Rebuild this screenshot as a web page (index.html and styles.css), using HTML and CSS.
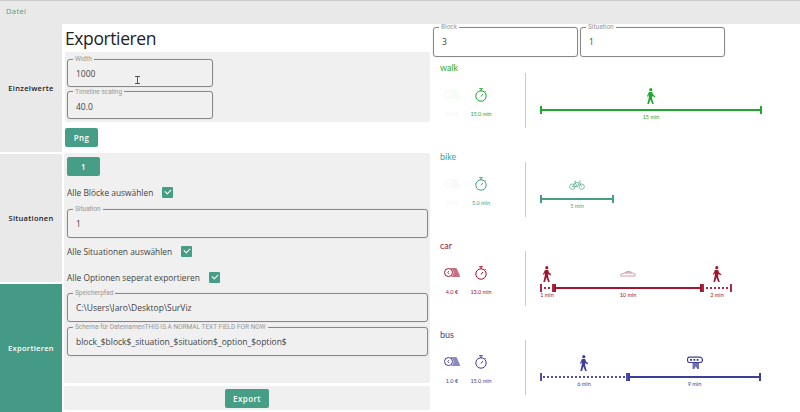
FILE: index.html
```html
<!DOCTYPE html>
<html lang="de">
<head>
    <meta charset="UTF-8">
    <title>Exportieren</title>
    <link rel="stylesheet" href="styles.css">
</head>
<body>
    <svg class="defs" width="0" height="0">
        <symbol id="i-walk" viewBox="0 0 10 16">
            <circle cx="4.800" cy="1.700" r="1.600" fill="currentColor"/>
            <path d="M3 4h3.200l.8 2.600L9.300 8.300 8.600 9.300 6.300 8l-.2 2.600L7.800 16H6.200L4.400 11.400 3 16H1.300L2.800 9.800V6.600L2 8.800 .9 8.300z" fill="currentColor"/>
        </symbol>
        <symbol id="i-bike" viewBox="0 0 24 14">
            <g fill="none" stroke="currentColor" stroke-width="1">
                <circle cx="5" cy="9.500" r="4"/>
                <circle cx="19" cy="9.500" r="4"/>
                <path d="M5 9.500 9 3.500h7l3 6M9 3.500l3.500 6L16 3.500M5 9.500h7.500M7.500 1.500h3M15 1h3"/>
            </g>
        </symbol>
        <symbol id="i-car" viewBox="0 0 24 10">
            <path d="M1 7c0-2 2-2.500 5-3 2-2 5-3 8.500-2.500 2 .3 3.500 1.500 5 2.500 2 .3 3.500 1 3.500 2.500 0 1-1 1.500-2 1.500H3C2 8.500 1 8 1 7z" fill="none" stroke="currentColor" stroke-width=".8" opacity=".8"/>
            <path d="M8 4c2-1.500 5-2 7-1.500l2 1.500z" fill="none" stroke="currentColor" stroke-width=".6" opacity=".7"/>
        </symbol>
        <symbol id="i-bus" viewBox="0 0 16 13">
            <path d="M2 .7h10.500c1.500 0 3 1.300 3 2.800s-1.200 2.500-2.700 2.500H2C1 6 .5 4.500 .5 3.200S1 .7 2 .7z" fill="none" stroke="currentColor" stroke-width="1.200"/>
            <path d="M3 2.500h2v1.800H3zM6.300 2.500h2v1.800h-2zM9.600 2.500h2v1.800h-2z" fill="currentColor"/>
            <path d="M5.500 6h6.500v6.500H10.300L8.800 10l-1.500 2.500H5.500z" fill="currentColor" opacity=".75"/>
        </symbol>
        <symbol id="i-clock" viewBox="0 0 12 14">
            <g fill="none" stroke="currentColor" stroke-width="1">
                <circle cx="6" cy="8" r="5.200"/>
                <path d="M4.200 .7h3.600M6 1v2M6 8.500l2-2.500M10 3.200l.9.9"/>
            </g>
        </symbol>
        <symbol id="i-cash" viewBox="0 0 16 11">
            <circle cx="4.500" cy="5.500" r="4" fill="none" stroke="currentColor" stroke-width="1"/>
            <path d="M6 1h5.500c2 0 2 2.500 3 4.500s1.500 3 1.500 4.500H7c1.500-1 2.500-2.800 2.500-4.500S8 2 6 1z" fill="currentColor" opacity=".6"/>
            <path d="M5 4 3.800 5.500 5 7" fill="none" stroke="currentColor" stroke-width=".8"/>
        </symbol>
    </svg>

    <header class="topbar">Datei</header>

    <div class="app">
        <nav class="tabs">
            <div class="tab">Einzelwerte</div>
            <div class="tab">Situationen</div>
            <div class="tab active">Exportieren</div>
        </nav>

        <main class="settings">
            <h1>Exportieren</h1>
            <div class="panel panel-single">
                <fieldset class="field narrow">
                    <legend>Width</legend>
                    <span>1000</span>
                    <svg class="ibeam" width="5" height="8" viewBox="0 0 5 8"><path d="M0 .5h5M0 7.500h5M2.500 .5v7" fill="none" stroke="#555"/></svg>
                </fieldset>
                <fieldset class="field narrow">
                    <legend>Timeline scaling</legend>
                    <span>40.0</span>
                </fieldset>
            </div>
            <div class="png-row"><button class="btn">Png</button></div>

            <div class="panel panel-situations">
                <button class="btn btn-wide">1</button>
                <label class="check check-first">Alle Blöcke auswählen <i class="box"></i></label>
                <fieldset class="field">
                    <legend>Situation</legend>
                    <span>1</span>
                </fieldset>
                <label class="check check-second">Alle Situationen auswählen <i class="box"></i></label>
                <label class="check check-third">Alle Optionen seperat exportieren <i class="box"></i></label>
                <fieldset class="field field-path">
                    <legend>Speicherpfad</legend>
                    <span>C:\Users\Jaro\Desktop\SurViz</span>
                </fieldset>
                <fieldset class="field">
                    <legend>Schema für DateinamenTHIS IS A NORMAL TEXT FIELD FOR NOW</legend>
                    <span>block_$block$_situation_$situation$_option_$option$</span>
                </fieldset>
            </div>
            <div class="panel panel-export"><button class="btn">Export</button></div>
        </main>

        <aside class="preview">
            <div class="selectors">
                <fieldset class="field block-select"><legend>Block</legend><span>3</span></fieldset>
                <fieldset class="field block-select"><legend>Situation</legend><span>1</span></fieldset>
            </div>

            <section class="option walk">
                <h2>walk</h2>
                <div class="option-body">
                    <div class="stats">
                        <div class="stat ghost"><svg class="cash" width="16" height="11"><use href="#i-cash"/></svg><small>0.0 €</small></div>
                        <div class="stat"><svg class="clock" width="12" height="14"><use href="#i-clock"/></svg><small>15.0 min</small></div>
                    </div>
                    <div class="timeline">
                        <div class="leg" style="width:222px">
                            <svg class="icon" width="10" height="16"><use href="#i-walk"/></svg>
                            <div class="bar"></div><small>15 min</small>
                        </div>
                    </div>
                </div>
            </section>

            <section class="option bike">
                <h2>bike</h2>
                <div class="option-body">
                    <div class="stats">
                        <div class="stat ghost"><svg class="cash" width="16" height="11"><use href="#i-cash"/></svg><small>0.0 €</small></div>
                        <div class="stat"><svg class="clock" width="12" height="14"><use href="#i-clock"/></svg><small>5.0 min</small></div>
                    </div>
                    <div class="timeline">
                        <div class="leg" style="width:74px">
                            <svg class="icon" width="16" height="16"><use href="#i-bike"/></svg>
                            <div class="bar"></div><small>5 min</small>
                        </div>
                    </div>
                </div>
            </section>

            <section class="option car">
                <h2>car</h2>
                <div class="option-body">
                    <div class="stats">
                        <div class="stat"><svg class="cash" width="16" height="11"><use href="#i-cash"/></svg><small>4.0 €</small></div>
                        <div class="stat"><svg class="clock" width="12" height="14"><use href="#i-clock"/></svg><small>13.0 min</small></div>
                    </div>
                    <div class="timeline">
                        <div class="leg" style="width:14px">
                            <svg class="icon" width="10" height="16"><use href="#i-walk"/></svg>
                            <div class="bar dotted"></div><small>1 min</small>
                        </div>
                        <div class="leg" style="width:148px">
                            <svg class="icon" width="16" height="16"><use href="#i-car"/></svg>
                            <div class="bar"></div><small>10 min</small>
                        </div>
                        <div class="leg" style="width:30px">
                            <svg class="icon" width="10" height="16"><use href="#i-walk"/></svg>
                            <div class="bar dotted"></div><small>2 min</small>
                        </div>
                    </div>
                </div>
            </section>

            <section class="option bus">
                <h2>bus</h2>
                <div class="option-body">
                    <div class="stats">
                        <div class="stat"><svg class="cash" width="16" height="11"><use href="#i-cash"/></svg><small>1.0 €</small></div>
                        <div class="stat"><svg class="clock" width="12" height="14"><use href="#i-clock"/></svg><small>15.0 min</small></div>
                    </div>
                    <div class="timeline">
                        <div class="leg" style="width:88px">
                            <svg class="icon" width="10" height="16"><use href="#i-walk"/></svg>
                            <div class="bar dotted"></div><small>6 min</small>
                        </div>
                        <div class="leg" style="width:133px">
                            <svg class="icon" width="16" height="16"><use href="#i-bus"/></svg>
                            <div class="bar"></div><small>9 min</small>
                        </div>
                    </div>
                </div>
            </section>
        </aside>
    </div>
</body>
</html>
```
FILE: styles.css
```css
* {
    box-sizing: border-box;
}
body {
    margin: 0;
    width: 800px;
    height: 412px;
    overflow: hidden;
    background-color: #fff;
    font-family: "Open Sans", "Noto Sans", sans-serif;
    color: #333;
}
.defs {
    position: absolute;
}
.topbar {
    height: 24px;
    padding: 5px 0 0 6px;
    background-color: #e9e9e9;
    border-top: 1px solid #ccc;
    font-size: 7.5px;
    letter-spacing: .4px;
    color: #459e85;
}
.app {
    display: flex;
    height: 388px;
}

/* linke Tabs */
.tabs {
    width: 62px;
    display: flex;
    flex-direction: column;
    gap: 2px;
}
.tab {
    height: 128px;
    display: flex;
    align-items: center;
    justify-content: center;
    background-color: #e9e9e9;
    font-size: 7.5px;
    font-weight: 600;
    letter-spacing: .3px;
    color: #222;
}
.tab.active {
    flex: 1;
    background-color: #459a85;
    color: #fff;
}

/* Einstellungen */
.settings {
    width: 368px;
    padding-left: 3px;
}
h1 {
    margin: 0;
    height: 28px;
    padding: 1px 0 0 0;
    font-size: 17.5px;
    font-weight: 400;
    letter-spacing: -.4px;
    line-height: 27px;
    color: #222;
}
.panel {
    background-color: #f0f0f0;
    border-radius: 2px;
}
.panel-single {
    height: 70px;
    padding: 3px 2px;
    display: flex;
    flex-direction: column;
    gap: 1px;
}
.png-row {
    height: 31px;
    padding-top: 6px;
}
.panel-situations {
    height: 230px;
    padding: 4px 2px 0 3px;
    margin-left: -1px;
}
.panel-export {
    height: 24px;
    margin-top: 3px;
    margin-left: -1px;
    display: flex;
    justify-content: center;
    align-items: center;
}
.btn {
    display: block;
    height: 19px;
    min-width: 33px;
    padding: 0 8px;
    border: none;
    border-radius: 2px;
    background-color: #459e85;
    color: #fff;
    font-family: inherit;
    font-size: 8px;
    font-weight: 600;
    letter-spacing: .4px;
}
.btn-wide {
    width: 33px;
}

/* Felder */
.field {
    position: relative;
    margin: 0;
    height: 33px;
    padding: 0 0 0 8px;
    border: 1px solid #888;
    border-radius: 3px;
    box-shadow: 0 0 1px #aaa;
    font-size: 8.5px;
    line-height: 20px;
    min-width: 0;
}
.field legend {
    margin-left: -3px;
    padding: 0 2px;
    font-size: 6.5px;
    line-height: 8px;
    font-family: Roboto, sans-serif;
    color: #999;
}
.field span {
    display: block;
    padding-top: 1px;
    color: #444;
}
.narrow {
    width: 146px;
}
.ibeam {
    position: absolute;
    left: 67px;
    top: 13px;
}
.check {
    display: flex;
    align-items: center;
    gap: 9px;
    font-size: 8.4px;
    color: #444;
    height: 12px;
}
.check-first {
    margin-top: 10px;
    margin-bottom: 7px;
}
.check-second {
    margin-top: 7px;
}
.check-third {
    margin-top: 14px;
    margin-bottom: 6px;
}
.box {
    position: relative;
    width: 11px;
    height: 11px;
    background-color: #459e85;
    border-radius: 1px;
}
.box::after {
    content: "";
    position: absolute;
    left: 3px;
    top: 2px;
    width: 5px;
    height: 3px;
    border-left: 1px solid #fff;
    border-bottom: 1px solid #fff;
    transform: rotate(-45deg);
}
.field-path {
    margin-bottom: 1px;
}

/* Vorschau */
.preview {
    flex: 1;
    padding-left: 3px;
}
.selectors {
    display: flex;
    gap: 2px;
    width: 292px;
    margin-top: -1px;
}
.block-select {
    width: 145px;
    height: 34px;
}
.option {
    height: 89px;
    color: #1fa82f;
}
.option h2 {
    margin: 0;
    padding: 0 0 0 7px;
    font-family: Lato, sans-serif;
    font-size: 9px;
    font-weight: 400;
    line-height: 11px;
}
.walk {
    margin-top: 5px;
}
.bike { color: #459e85; }
.car { color: #a3142d; }
.bus { color: #3e3e9c; }
.option-body {
    display: flex;
    height: 55px;
}
.stats {
    width: 93px;
    display: flex;
    gap: 4px;
    padding: 15px 0 0 7px;
    border-right: 1px solid #ccc;
}
.stat {
    width: 24px;
    display: flex;
    flex-direction: column;
    align-items: center;
    gap: 9px;
}
.stat svg {
    flex: none;
}
.stat .cash {
    margin-top: 1px;
    margin-bottom: 2px;
}
.stat + .stat {
    width: 26px;
}
.ghost {
    opacity: .07;
}
small {
    font-family: Lato, sans-serif;
    font-size: 5.5px;
    line-height: 7px;
    white-space: nowrap;
}
.timeline {
    display: flex;
    padding: 15px 0 0 14px;
}
.leg {
    display: flex;
    flex-direction: column;
    align-items: center;
}
.icon {
    height: 16px;
    margin-bottom: 5px;
}
.bar {
    position: relative;
    width: 100%;
    height: 2px;
    border-top: 2px solid currentColor;
    margin-bottom: 3px;
}
.bar.dotted {
    border-top-style: dotted;
    opacity: .9;
}
.bar::before,
.bar::after {
    content: "";
    position: absolute;
    top: -5px;
    width: 2px;
    height: 8px;
    background-color: currentColor;
}
.bar::before { left: 0; }
.bar::after { right: 0; }
```
